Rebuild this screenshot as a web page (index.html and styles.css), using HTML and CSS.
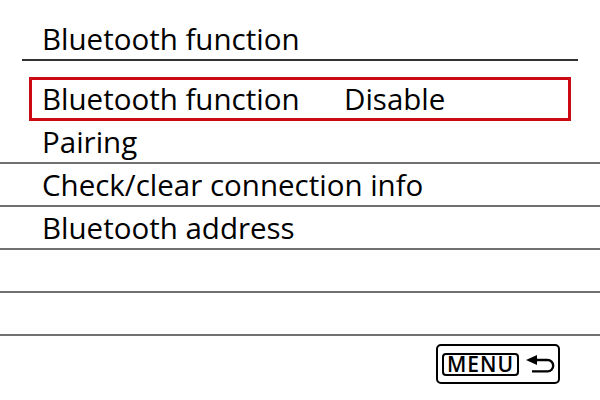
FILE: index.html
```html
<!DOCTYPE html>
<html lang="en">
<head>
    <meta charset="UTF-8">
    <title>Bluetooth function</title>
    <link rel="stylesheet" href="styles.css">
</head>
<body>
    <div class="screen">
        <div class="title">Bluetooth function</div>

        <div class="menu">
            <div class="menu-item selected">
                <span class="label">Bluetooth function</span>
                <span class="value">Disable</span>
            </div>
            <div class="menu-item">Pairing</div>
            <div class="menu-item">Check/clear connection info</div>
            <div class="menu-item">Bluetooth address</div>
            <div class="menu-item"></div>
            <div class="menu-item"></div>
        </div>

        <div class="footer">
            <div class="menu-btn">
                <span class="menu-key">MENU</span>
                <!-- return arrow -->
                <svg class="back-icon" width="30" height="19" viewBox="0 0 30 19">
                    <polygon points="0,5 11,0 11,10" fill="#000"/>
                    <path d="M10 5 H21.5 A5.7 5.7 0 0 1 21.5 16.4 H6" fill="none" stroke="#000" stroke-width="2.4"/>
                </svg>
            </div>
        </div>
    </div>
</body>
</html>
```

FILE: styles.css
```css
* {
    margin: 0;
    padding: 0;
    box-sizing: border-box;
}

body {
    background: #fff;
    color: #000;
    font-family: "Open Sans", sans-serif;
}

.screen {
    width: 600px;
    height: 400px;
    display: flex;
    flex-direction: column;
}

.title {
    margin: 0 22px;
    height: 61px;
    padding: 18px 0 0 20px;
    font-size: 29.5px;
    line-height: 41px;
    border-bottom: 2px solid #333;
}

.menu {
    margin-top: 16px;
}

.menu-item {
    height: 43px;
    padding: 1px 0 0 42px;
    font-size: 29.5px;
    line-height: 40px;
    border-bottom: 2px solid #707070;
}

.menu-item.selected {
    height: 44px;
    margin: 0 29px;
    padding: 0 0 0 10px;
    border: 3px solid #cc0a14;
    display: flex;
    line-height: 38px;
}

.menu-item.selected .label {
    width: 302px;
}

.footer {
    display: flex;
    justify-content: flex-end;
    padding: 8px 40px 0 0;
}

.menu-btn {
    display: flex;
    align-items: center;
    gap: 7px;
    height: 40px;
    padding: 0 2px 0 4px;
    border: 2px solid #000;
    border-radius: 5px;
}

.menu-key {
    width: 77px;
    height: 23px;
    font-size: 21px;
    font-weight: 600;
    line-height: 19px;
    letter-spacing: 1px;
    text-align: center;
    border: 2px solid #000;
    border-radius: 4px;
}

.back-icon {
    display: block;
}
```
